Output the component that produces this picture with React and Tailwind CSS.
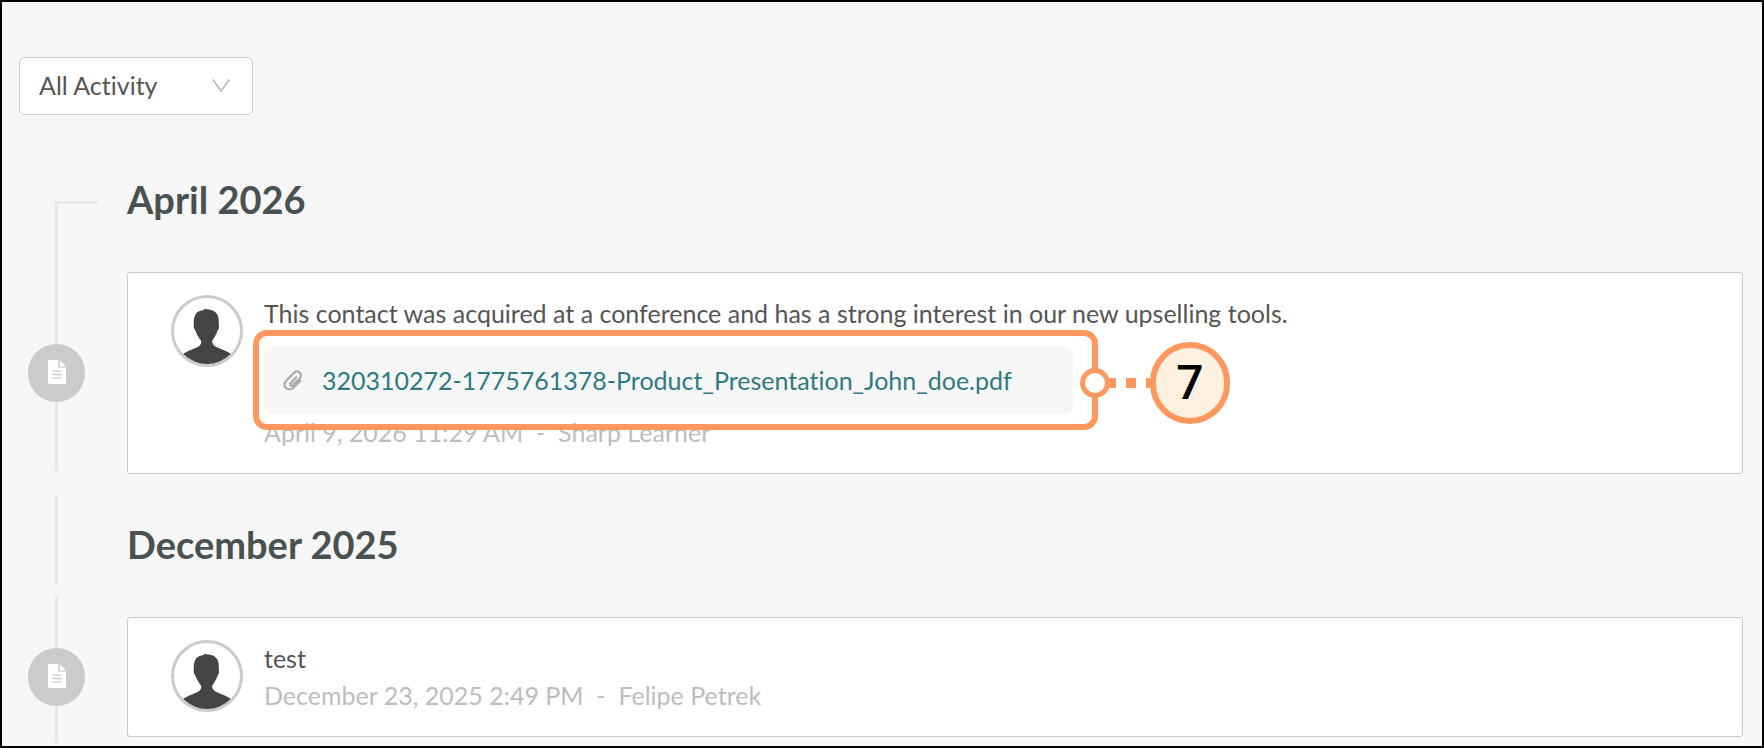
import React from "react";

function NoteIcon() {
  return (
    <svg viewBox="0 0 18 24" className="mb-[3px] h-6 w-[18px]" aria-hidden="true">
      <path d="M1.200 0H10.300V7.700H18V22.800a1.200 1.200 0 0 1-1.200 1.200H1.200A1.200 1.200 0 0 1 0 22.800V1.200A1.200 1.200 0 0 1 1.200 0z" fill="#fff" />
      <path d="M11.800 0.200L18 6.400H11.800z" fill="#fff" />
      <path d="M4.200 11.200h9.300M4.200 14.500h9.300M4.200 17.800h9.300" stroke="#cbcbcb" strokeWidth="1.300" />
    </svg>
  );
}

function ClipIcon() {
  return (
    <svg viewBox="0 0 20 22" className="h-[22px] w-5 shrink-0" fill="none" stroke="#acacac" strokeWidth="2.300" strokeLinecap="round" aria-hidden="true">
      <path d="M13.200 7.400L7.600 13.200a1.500 1.500 0 0 0 2.100 2.200L16.800 8.200a3.900 3.900 0 0 0-5.600-5.600L2.900 11a4.900 4.900 0 0 0 7 7L17.600 10.700" />
    </svg>
  );
}

function Avatar() {
  return (
    <span className="block size-[72px] shrink-0 overflow-hidden rounded-full border-[3px] border-[#cbcbcb] bg-white">
      <svg viewBox="0 0 66 66" className="size-full" aria-hidden="true">
        <path
          d="M28 12.500L31.500 10.800L33.500 11.500C38 11.500 42 13.500 43.800 17.500C45 20.500 44.800 23.500 44.700 26C45.500 28 45 31 43.600 32.500C42.500 36.500 40 40 38.300 42.500C38 45.500 39 47 42 48.800C47 51.500 53.500 53 57.500 56.500V66H8.500V56.500C12.500 53 19 51.500 24 48.800C27 47 27.500 45.500 27 42.500C25 40 22.800 36.500 21.300 32.500C19.800 30.500 19.300 28 19.800 26C19.500 22.500 20 18.500 22 15.500C23.500 13.700 25.500 12.700 28 12.500z"
          fill="#444"
        />
      </svg>
    </span>
  );
}

function Callout({ number }) {
  return (
    <div className="pointer-events-none absolute -top-[17px] -right-[25px] -bottom-4 -left-[11px] rounded-[14px] border-[6px] border-[#ff985f]">
      <div className="absolute top-1/2 left-full flex -translate-y-1/2 items-center pt-[6px]">
        <span className="-ml-3 size-[30px] rounded-full border-[5px] border-[#ff985f] bg-white" />
        <svg viewBox="0 0 44 10" className="-ml-1 h-[10px] w-[44px]" aria-hidden="true">
          <path d="M0 0h10v10H0zM20 0h10v10H20zM40 0h4v10h-4z" fill="#ff985f" />
        </svg>
        <span className="flex h-[82px] w-20 items-center justify-center rounded-full border-[6px] border-[#ff985f] bg-[#fff1df] font-[Roboto,sans-serif] text-5xl font-medium text-black">
          {number}
        </span>
      </div>
    </div>
  );
}

function MonthHeading({ children, first }) {
  return (
    <div className="flex">
      <div className="flex w-[99px] shrink-0 flex-col pl-[27px]">
        {first ? (
          <span className="mt-[30px] w-[43px] grow border-t-[3px] border-l-[3px] border-[#e8e8e8]" />
        ) : (
          <>
            <span className="h-[89px] w-[3px] bg-[#e8e8e8]" />
            <span className="mt-[10px] w-[3px] grow bg-[#e8e8e8]" />
          </>
        )}
      </div>
      <h2 className={`pb-[45px] text-[38px] leading-[56px] font-bold text-[#475251] ${first ? "" : "pt-5"}`}>{children}</h2>
    </div>
  );
}

function Activity({ text, date, author, children, last }) {
  return (
    <article className="flex">
      <div className="grid w-[99px] shrink-0">
        <span className={`ml-[27px] w-[3px] bg-[#e8e8e8] [grid-area:1/1] ${last ? "-mb-[6px]" : "mb-[3px]"}`} />
        <span className="flex h-[58px] w-[57px] items-center justify-center self-center rounded-full bg-[#cbcbcb] [grid-area:1/1]">
          <NoteIcon />
        </span>
      </div>
      <div className="flex min-w-0 grow gap-[21px] rounded-[3px] border border-[#c9c9c9] bg-white pt-[22px] pb-[22px] pl-[43px]">
        <Avatar />
        <div className="min-w-0 grow text-[25px] leading-[37px]">
          <p className="text-[#555]">{text}</p>
          {children}
          <p className="whitespace-pre text-[#bdbdbd]">
            {date}{"  -  "}{author}
          </p>
        </div>
      </div>
    </article>
  );
}

export default function App() {
  return (
    <main className="min-h-screen border-2 border-black bg-[#f7f7f7] pb-[9px] font-[Lato,sans-serif] [font-variant-ligatures:none]">
      <div className="px-[17px] pt-[55px]">
        <div className="relative w-[234px]">
          <select
            aria-label="Activity type"
            className="block h-[58px] w-full appearance-none rounded-[6px] border border-[#c9c9c9] bg-white pl-[19px] text-[25px] text-[#555] [font-variant-ligatures:none]"
          >
            <option>All Activity</option>
          </select>
          <svg viewBox="0 0 18 14" className="pointer-events-none absolute top-[22px] right-[23px] h-[14px] w-[18px]" fill="none" stroke="#bbb" strokeWidth="1.800" aria-hidden="true">
            <path d="M0.700 0.500L9 12L17.300 0.500" />
          </svg>
        </div>
      </div>
      <div className="mt-14 pr-[19px] pl-[26px]">
        <section className="mb-[22px]">
          <MonthHeading first>April 2026</MonthHeading>
          <Activity
            text="This contact was acquired at a conference and has a strong interest in our new upselling tools."
            date="April 9, 2026 11:29 AM"
            author="Sharp Learner"
          >
            <div className="relative mt-[15px] flex h-[67px] w-[809px] items-center gap-[19px] rounded-lg bg-[#f7f7f7] pl-[19px]">
              <ClipIcon />
              <a href="#attachment" className="text-[#2d7a84]">
                320310272-1775761378-Product_Presentation_John_doe.pdf
              </a>
              <Callout number={7} />
            </div>
          </Activity>
        </section>
        <section>
          <MonthHeading>December 2025</MonthHeading>
          <Activity text="test" date="December 23, 2025 2:49 PM" author="Felipe Petrek" last />
        </section>
      </div>
    </main>
  );
}
